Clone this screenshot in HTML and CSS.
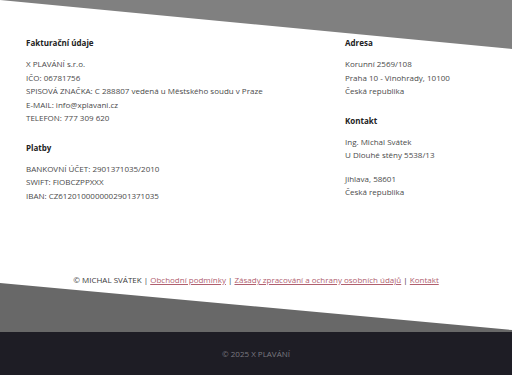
FILE: index.html
```html
<!DOCTYPE html>
<html lang="cs">
<head>
    <meta charset="UTF-8">
    <meta name="viewport" content="width=device-width, initial-scale=1.0">
    <title>X PLAVÁNÍ - Kontakt</title>
    <link rel="stylesheet" href="styles.css">
</head>
<body>
    <div class="info">
        <div class="info-col">
            <div class="block">
                <h3>Fakturační údaje</h3>
                <p>X PLAVÁNÍ s.r.o.<br>
                IČO: 06781756<br>
                SPISOVÁ ZNAČKA: C 288807 vedená u Městského soudu v Praze<br>
                E-MAIL: info@xplavani.cz<br>
                TELEFON: 777 309 620</p>
            </div>
            <div class="block">
                <h3>Platby</h3>
                <p>BANKOVNÍ ÚČET: 2901371035/2010<br>
                SWIFT: FIOBCZPPXXX<br>
                IBAN: CZ6120100000002901371035</p>
            </div>
        </div>
        <div class="info-col">
            <div class="block">
                <h3>Adresa</h3>
                <p>Korunní 2569/108<br>
                Praha 10 - Vinohrady, 10100<br>
                Česká republika</p>
            </div>
            <div class="block">
                <h3>Kontakt</h3>
                <p>Ing. Michal Svátek<br>
                U Dlouhé stěny 5538/13</p>
                <p>Jihlava, 58601<br>
                Česká republika</p>
            </div>
        </div>
    </div>

    <div class="legal">
        © MICHAL SVÁTEK | <a href="#">Obchodní podmínky</a> | <a href="#">Zásady zpracování a ochrany osobních údajů</a> | <a href="#">Kontakt</a>
    </div>

    <div class="wedge-bottom"></div>
    <div class="copyright">© 2025 X PLAVÁNÍ</div>
</body>
</html>
```

FILE: styles.css
```css
body {
    margin: 0;
    font-family: "Open Sans", Arial, sans-serif;
    font-size: 8px;
    color: #4a4a4a;
    background: #fff;
    position: relative;
}
/* grey slant at the top of the page */
body::before {
    content: "";
    position: absolute;
    top: 0;
    left: 0;
    right: 0;
    height: 49px;
    background: #808080;
    clip-path: polygon(0 0, 100% 0, 100% 100%);
    z-index: -1;
}
.info {
    display: grid;
    grid-template-columns: 319px 1fr;
    padding: 36px 26px 0;
}
.block {
    margin-bottom: 16px;
}
.block:last-child {
    margin-bottom: 0;
}
h3 {
    margin: 0 0 8px;
    font-size: 8px;
    line-height: 13px;
    font-weight: 700;
    color: #222;
}
p {
    margin: 0;
    line-height: 13.5px;
}
p + p {
    margin-top: 10px;
}
.legal {
    margin-top: 71px;
    text-align: center;
    font-size: 8px;
    line-height: 14px;
    color: #3a3a3a;
}
.legal a {
    color: #b0606f;
}
.wedge-bottom {
    margin-top: -4px;
    height: 49px;
    background: #686868;
    clip-path: polygon(0 0, 100% 96%, 100% 100%, 0 100%);
}
.copyright {
    height: 43px;
    line-height: 43px;
    background: #1e1d25;
    color: #7a7980;
    text-align: center;
    font-size: 8px;
}
```
